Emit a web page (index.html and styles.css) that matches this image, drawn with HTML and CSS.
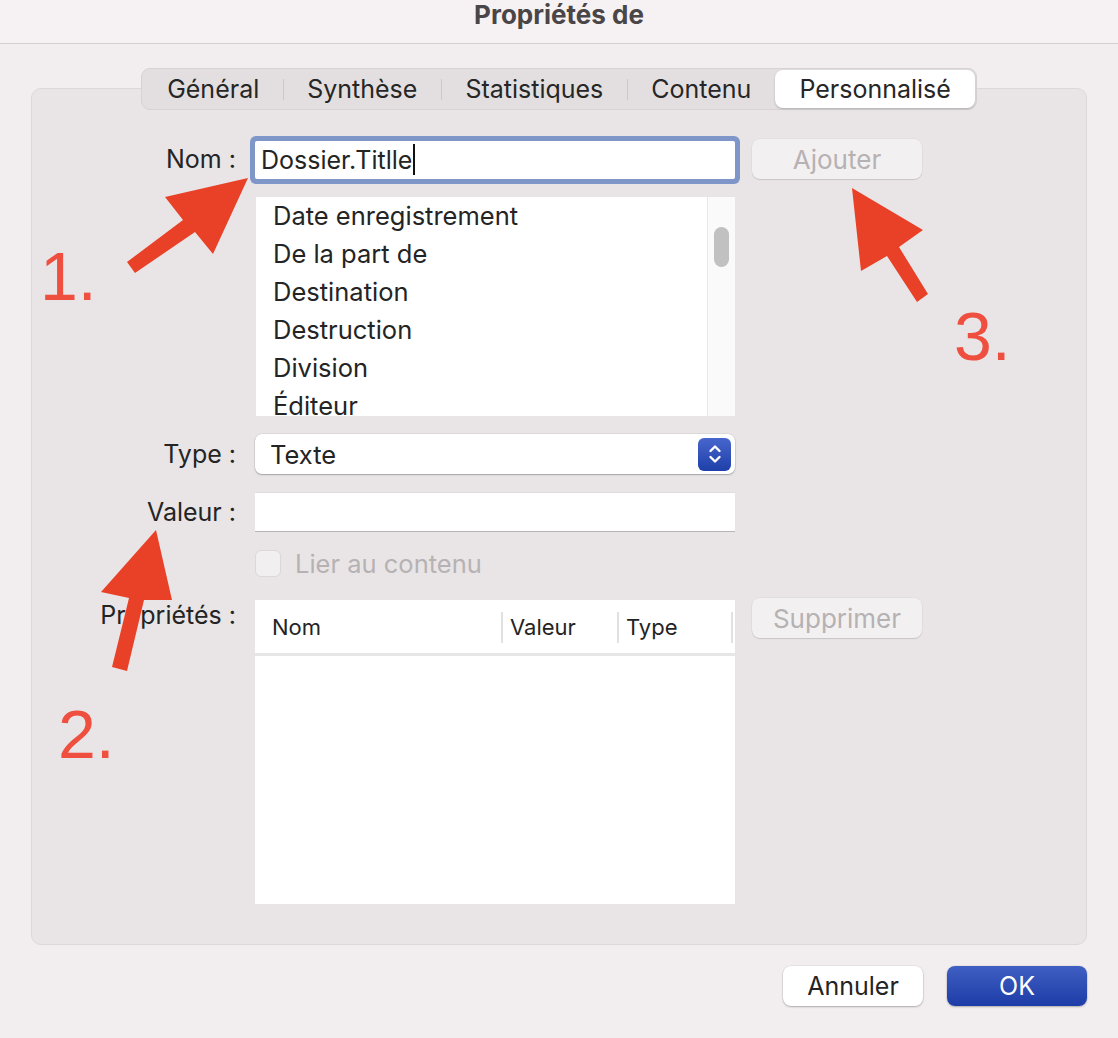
FILE: index.html
```html
<!DOCTYPE html>
<html lang="fr">
  <head>
    <meta charset="UTF-8" />
    <meta name="viewport" content="width=device-width, initial-scale=1.0" />
    <title>Propriétés de</title>
    <link rel="stylesheet" href="styles.css">
  </head>

  <body>
    <div class="window">
      <header class="titlebar">Propriétés de</header>

      <main class="content">
        <nav class="tabs">
          <span class="tab">Général</span>
          <span class="tab">Synthèse</span>
          <span class="tab">Statistiques</span>
          <span class="tab">Contenu</span>
          <span class="tab active">Personnalisé</span>
        </nav>

        <section class="panel">
          <div class="row row-name">
            <span class="label">Nom :</span>
            <div class="field focused">
              <span class="value">Dossier.Titlle</span><span class="caret"></span>
            </div>
            <button class="btn btn-side" disabled>Ajouter</button>
          </div>

          <div class="row row-list">
            <span class="label"></span>
            <div class="list">
              <ul class="items">
                <li>Date enregistrement</li>
                <li>De la part de</li>
                <li>Destination</li>
                <li>Destruction</li>
                <li>Division</li>
                <li>Éditeur</li>
              </ul>
              <div class="scrollbar"><div class="thumb"></div></div>
            </div>
          </div>

          <div class="row row-type">
            <span class="label">Type :</span>
            <div class="select">
              <span class="value">Texte</span>
              <span class="stepper">
                <svg width="16" height="26" viewBox="0 0 16 26">
                  <path d="M3.5 10 L8 5.5 L12.5 10 M3.5 16 L8 20.5 L12.5 16" fill="none" stroke="#fff" stroke-width="2.4" stroke-linecap="round" stroke-linejoin="round" />
                </svg>
              </span>
            </div>
          </div>

          <div class="row row-value">
            <span class="label">Valeur :</span>
            <div class="field plain"></div>
          </div>

          <div class="row row-check">
            <span class="label"></span>
            <span class="checkbox"></span>
            <span class="check-text">Lier au contenu</span>
          </div>

          <div class="row row-props">
            <span class="label">Propriétés :</span>
            <div class="table">
              <div class="thead">
                <span class="th th-name">Nom</span>
                <span class="th th-value">Valeur</span>
                <span class="th th-type">Type</span>
              </div>
            </div>
            <button class="btn btn-side" disabled>Supprimer</button>
          </div>
        </section>

        <footer class="actions">
          <button class="btn btn-cancel">Annuler</button>
          <button class="btn btn-primary">OK</button>
        </footer>
      </main>

      <!-- red annotations drawn over the dialog -->
      <svg class="annotations" viewBox="0 0 1118 1038" width="1118" height="1038">
        <polygon points="127,262 183,220 165,197 248,178 213,254 195,232 135,273" />
        <polygon points="156,530 172,600 144,600 127,671 112,667 129,598 101,592" />
        <polygon points="852,188 923,230 899,247 928,294 917,302 887,256 861,271" />
        <text x="40" y="300">1.</text>
        <text x="58" y="758">2.</text>
        <text x="954" y="360">3.</text>
      </svg>
    </div>
  </body>
</html>
```

FILE: styles.css
```css
* {
  margin: 0;
  padding: 0;
  box-sizing: border-box;
}

body {
  font-family: Inter, "Noto Sans", sans-serif;
  background-color: #f2eeef;
  color: #242424;
}

.window {
  position: relative;
  width: 1118px;
  height: 1038px;
  overflow: hidden;
}

.titlebar {
  height: 44px;
  background-color: #f6f2f3;
  border-bottom: 1px solid #d3cfd0;
  text-align: center;
  font-size: 26px;
  font-weight: 700;
  line-height: 30px;
  color: #4a4546;
}

.content {
  display: flex;
  flex-direction: column;
  padding: 24px 31px 0 31px;
}

/* segmented tabs */
.tabs {
  position: relative;
  z-index: 1;
  align-self: center;
  display: flex;
  height: 42px;
  padding: 1px;
  margin-bottom: -22px;
  background-color: #e3dfe0;
  border: 1px solid #d7d3d4;
  border-radius: 9px;
}

.tab {
  position: relative;
  padding: 0 24px;
  font-size: 25px;
  line-height: 38px;
  color: #262626;
}

.tab + .tab::before {
  content: "";
  position: absolute;
  left: 0;
  top: 9px;
  bottom: 8px;
  width: 1px;
  background-color: #cdc9ca;
}

.tab.active {
  background-color: #fff;
  border-radius: 8px;
  box-shadow: 0 1px 2px rgba(0, 0, 0, 0.22);
}

.tab.active::before {
  display: none;
}

/* panel */
.panel {
  height: 857px;
  padding-top: 50px;
  background-color: #e9e5e6;
  border: 1px solid #dcd8d9;
  border-radius: 10px;
}

.row {
  display: flex;
  align-items: center;
}

.label {
  flex: none;
  width: 204px;
  margin-right: 19px;
  text-align: right;
  font-size: 25px;
  white-space: nowrap;
}

.field {
  width: 480px;
  height: 38px;
  background-color: #fff;
}

.field.focused {
  display: flex;
  align-items: center;
  margin-top: 1px;
  padding-left: 6px;
  font-size: 25px;
  border-radius: 2px;
  box-shadow: 0 0 0 5px #7f96c9;
}

.caret {
  width: 2px;
  height: 31px;
  margin-left: 1px;
  background-color: #111;
}

.field.plain {
  height: 40px;
  border-top: 1px solid #e0dddd;
  border-bottom: 1px solid #b8b5b6;
}

.btn {
  font-family: inherit;
  font-size: 25px;
  height: 40px;
  border: none;
  border-radius: 8px;
  background-color: #fff;
  color: #242424;
  box-shadow: 0 1px 2px rgba(0, 0, 0, 0.25), 0 0 0 0.5px rgba(0, 0, 0, 0.08);
}

.btn-side {
  width: 170px;
  margin-left: 17px;
  font-size: 26px;
  background-color: #f3f0f1;
  color: #b6b2b3;
  box-shadow: 0 1px 1px rgba(0, 0, 0, 0.12), 0 0 0 0.5px rgba(0, 0, 0, 0.05);
}

/* list */
.row-list {
  margin-top: 18px;
}

.list {
  display: flex;
  width: 479px;
  height: 219px;
  margin-left: 1px;
  overflow: hidden;
  background-color: #fff;
}

.items {
  flex: 1;
  list-style: none;
  padding-left: 17px;
  font-size: 25.5px;
  line-height: 38px;
}

.scrollbar {
  flex: none;
  width: 28px;
  padding: 30px 0 0 6px;
  background-color: #fafafa;
  border-left: 1px solid #e8e8e8;
}

.thumb {
  width: 15px;
  height: 40px;
  border-radius: 8px;
  background-color: #c1c1c1;
}

/* select */
.row-type {
  margin-top: 18px;
}

.select {
  display: flex;
  align-items: center;
  justify-content: space-between;
  width: 480px;
  height: 40px;
  padding: 0 4px 0 15px;
  background-color: #fff;
  border-radius: 7px;
  font-size: 25.5px;
  box-shadow: 0 1px 1.5px rgba(0, 0, 0, 0.25), 0 0 0 0.5px rgba(0, 0, 0, 0.1);
}

.stepper {
  display: flex;
  align-items: center;
  justify-content: center;
  width: 33px;
  height: 33px;
  border-radius: 6px;
  background: linear-gradient(#4766cd, #1f3fa9);
}

.row-value {
  margin-top: 18px;
}

/* checkbox */
.row-check {
  margin-top: 16px;
}

.checkbox {
  width: 26px;
  height: 27px;
  border-radius: 6px;
  background-color: #f2eff0;
  border: 1px solid #dcd8d9;
}

.check-text {
  margin-left: 14px;
  font-size: 25.5px;
  color: #b6b2b3;
}

/* properties table */
.row-props {
  align-items: flex-start;
  margin-top: 19px;
}

.row-props .label {
  line-height: 34px;
}

.table {
  width: 480px;
  height: 304px;
  margin-top: 2px;
  background-color: #fff;
}

.thead {
  display: flex;
  align-items: center;
  height: 56px;
  border-bottom: 3px solid #e6e6e6;
}

.th {
  height: 31px;
  margin-top: 2px;
  font-size: 22px;
  line-height: 31px;
}

.th-name {
  width: 246px;
  padding-left: 17px;
}

.th-value {
  width: 116px;
  padding-left: 7px;
  border-left: 2px solid #e1e1e1;
}

.th-type {
  width: 116px;
  padding-left: 7px;
  border-left: 2px solid #e1e1e1;
  border-right: 2px solid #e1e1e1;
}

/* footer buttons */
.actions {
  display: flex;
  justify-content: flex-end;
  gap: 24px;
  margin-top: 21px;
}

.btn-cancel,
.btn-primary {
  width: 140px;
}

.btn-primary {
  color: #fff;
  background: linear-gradient(#3f5fc3, #1d3ca7);
}

/* annotation overlay */
.annotations {
  position: absolute;
  top: 0;
  left: 0;
  pointer-events: none;
}

.annotations polygon {
  fill: #e94128;
}

.annotations text {
  fill: #ee4f3f;
  font-family: "Liberation Sans", Arial, sans-serif;
  font-size: 68px;
}
```
